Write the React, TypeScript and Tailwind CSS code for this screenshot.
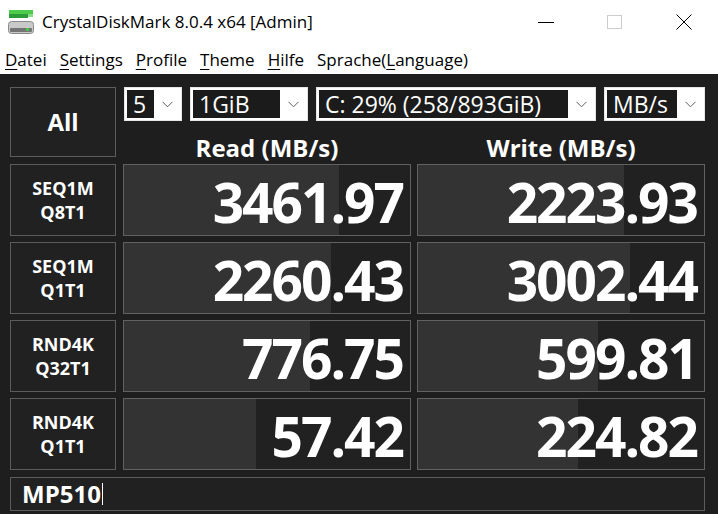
import React from 'react';

type Row = { l1: string; l2: string; read: string; readFill: number; write: string; writeFill: number };

const rows: Row[] = [
  { l1: 'SEQ1M', l2: 'Q8T1', read: '3461.97', readFill: 75, write: '2223.93', writeFill: 72 },
  { l1: 'SEQ1M', l2: 'Q1T1', read: '2260.43', readFill: 72.5, write: '3002.44', writeFill: 74 },
  { l1: 'RND4K', l2: 'Q32T1', read: '776.75', readFill: 65, write: '599.81', writeFill: 63 },
  { l1: 'RND4K', l2: 'Q1T1', read: '57.42', readFill: 46, write: '224.82', writeFill: 56 },
];

const ui = { fontFamily: '"Open Sans", "Noto Sans", sans-serif' };

function AppIcon() {
  return (
    <svg width="26" height="26" viewBox="0 0 26 26">
      <rect x="1" y="1" width="24" height="4" fill="#4ccb4c" />
      <rect x="1" y="5" width="19" height="4" fill="#2c9c38" />
      <rect x="20" y="5" width="5" height="3" fill="#86dc86" />
      <rect x="0.5" y="12.5" width="25" height="12" rx="3" fill="#c9c9c9" stroke="#8a8a8a" />
      <rect x="2" y="19" width="22" height="4" rx="1" fill="#757575" />
      <rect x="18" y="19" width="3" height="3" fill="#46c846" />
    </svg>
  );
}

function Combo({ text, width }: { text: string; width: string }) {
  return (
    <div className={`${width} h-[34px] bg-white border border-[#e6e6e6] flex p-[2px] pr-0`}>
      <div className="flex-1 bg-[#1b1b1b] flex items-center pl-[6px]">
        <span className="text-white text-[23px] leading-none whitespace-nowrap">{text}</span>
      </div>
      <div className="w-[27px] flex items-center justify-center">
        <svg width="11" height="7" viewBox="0 0 11 7">
          <path d="M0.5 0.8 L5.5 5.8 L10.5 0.8" fill="none" stroke="#606060" strokeWidth="1" />
        </svg>
      </div>
    </div>
  );
}

function Meter({ value, fill }: { value: string; fill: number }) {
  return (
    <div className="relative w-[288px] h-full border border-[#616161] bg-[#212121]">
      <div className="absolute inset-y-0 left-0 bg-[#333333]" style={{ width: `${fill}%` }} />
      <div className="relative h-full flex items-center justify-end pr-[7px] pt-[3px]">
        <span className="text-white font-bold text-[55px] leading-none tracking-[-2px]">{value}</span>
      </div>
    </div>
  );
}

function MenuItem({ first, rest }: { first: string; rest: string }) {
  return (
    <span className="px-[6.5px]">
      <span className="underline underline-offset-[3px] decoration-1">{first}</span>
      {rest}
    </span>
  );
}

export default function App() {
  return (
    <div className="w-[718px] h-[514px] bg-white flex flex-col overflow-hidden" style={ui}>
      {/* title bar */}
      <div className="h-[44px] flex items-center shrink-0">
        <div className="pl-[8px] pr-[8px] flex items-center">
          <AppIcon />
        </div>
        <span className="text-[17px] text-black">CrystalDiskMark 8.0.4 x64 [Admin]</span>
        <div className="ml-auto flex h-full">
          <div className="w-[69px] flex items-center justify-center">
            <div className="w-[16px] h-px bg-black" />
          </div>
          <div className="w-[69px] flex items-center justify-center">
            <div className="w-[15px] h-[14px] border border-[#cccccc]" />
          </div>
          <div className="w-[69px] flex items-center justify-center">
            <svg width="16" height="16" viewBox="0 0 16 16">
              <path d="M0.5 0.5 L15.5 15.5 M15.5 0.5 L0.5 15.5" stroke="#000" strokeWidth="1" />
            </svg>
          </div>
        </div>
      </div>

      {/* menu bar */}
      <div className="h-[30px] flex items-center text-[17px] text-black shrink-0 pt-[2px] -ml-[1.5px]">
        <MenuItem first="D" rest="atei" />
        <MenuItem first="S" rest="ettings" />
        <MenuItem first="P" rest="rofile" />
        <MenuItem first="T" rest="heme" />
        <MenuItem first="H" rest="ilfe" />
        <span className="px-[6.5px]">
          Sprache(<span className="underline underline-offset-[3px] decoration-1">L</span>anguage)
        </span>
      </div>

      {/* main panel */}
      <div className="flex-1 bg-[#1e1e1e] pl-[10px] pt-[13px] flex flex-col">
        <div className="flex h-[77px]">
          <div className="w-[106px] h-[70px] border border-[#5c5c5c] bg-[#212121] flex items-center justify-center">
            <span className="text-white font-bold text-[24px]">All</span>
          </div>
          <div className="ml-[7px] flex flex-col">
            <div className="flex gap-[8px] ml-[1px]">
              <Combo text="5" width="w-[58px]" />
              <Combo text="1GiB" width="w-[118px]" />
              <Combo text="C: 29% (258/893GiB)" width="w-[280px]" />
              <Combo text="MB/s" width="w-[101px]" />
            </div>
            <div className="flex gap-[6px] pt-[12px]">
              <div className="w-[288px] text-center text-white font-bold text-[24px] leading-[30px]">Read (MB/s)</div>
              <div className="w-[288px] text-center text-white font-bold text-[24px] leading-[30px]">Write (MB/s)</div>
            </div>
          </div>
        </div>

        <div className="flex flex-col gap-[6px]">
          {rows.map((r, i) => (
            <div key={i} className="flex h-[72px]">
              <div className="w-[106px] h-full border border-[#5c5c5c] bg-[#212121] flex flex-col items-center justify-center">
                <span className="text-white font-bold text-[18px] leading-[24px]">{r.l1}</span>
                <span className="text-white font-bold text-[18px] leading-[24px]">{r.l2}</span>
              </div>
              <div className="ml-[7px] h-full">
                <Meter value={r.read} fill={r.readFill} />
              </div>
              <div className="ml-[6px] h-full">
                <Meter value={r.write} fill={r.writeFill} />
              </div>
            </div>
          ))}
        </div>

        <div className="mt-[7px] w-[695px] h-[34px] border border-[#5c5c5c] bg-[#212121] flex items-center pl-[11px]">
          <span className="text-white font-bold text-[24px] leading-none">MP510</span>
          <span className="inline-block w-px h-[22px] bg-white ml-px" />
        </div>
      </div>
    </div>
  );
}
